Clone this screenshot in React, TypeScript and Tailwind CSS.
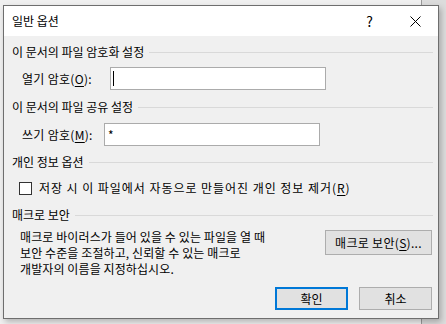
import React from "react";

const Mn = ({ k }: { k: string }) => <span className="underline underline-offset-2">{k}</span>;

const GroupHeader = ({ title }: { title: string }) => (
  <div className="flex h-[16px] items-center pl-[8px] pr-[5px]">
    <span className="leading-[16px] whitespace-nowrap">{title}</span>
    <div className="ml-[5px] h-px flex-1 bg-[#d9d9d9]" />
  </div>
);

const Btn = ({ children, primary }: { children: React.ReactNode; primary?: boolean }) => (
  <button
    className={
      primary
        ? "flex h-[23px] w-[73px] items-center justify-center border-2 border-[#0078d7] bg-[#e1e1e1] leading-[16px]"
        : "flex h-[23px] w-[73px] items-center justify-center border border-[#adadad] bg-[#e1e1e1] leading-[16px]"
    }
  >
    {children}
  </button>
);

export default function App() {
  return (
    <div className="relative h-[324px] w-[446px] overflow-hidden bg-[#f0f0f0] font-['Noto_Sans_CJK_KR','Noto_Sans',sans-serif] text-[12px] text-black">
      {/* window edge behind the dialog */}
      <div className="absolute left-[421px] top-0 h-full w-[25px] border-l border-[#9a9a9a] bg-[#dcdcdc]" />
      <div className="relative ml-[3px] mt-[5px] flex h-[314px] w-[436px] flex-col border border-[#6e6e6e] bg-[#f0f0f0] shadow-[2px_3px_6px_rgba(0,0,0,0.25)]">
        {/* title bar */}
        <div className="flex h-[30px] items-center bg-white pl-[8px]">
          <span className="leading-[16px]">일반 옵션</span>
          <span className="ml-auto mr-[37px] text-[14px] leading-[16px]">?</span>
          <svg width="11" height="11" viewBox="0 0 11 11" className="mr-[17px]">
            <path d="M0.5 0.5 L10.5 10.5 M10.5 0.5 L0.5 10.5" stroke="#000" strokeWidth="1" />
          </svg>
        </div>

        <div className="mt-[8px]">
          <GroupHeader title="이 문서의 파일 암호화 설정" />
        </div>
        <div className="mt-[7px] flex h-[23px] items-center">
          <span className="w-[106px] pl-[18px] leading-[16px] tracking-[0.3px]">
            열기 암호(<Mn k="O" />):
          </span>
          <div className="flex h-[23px] w-[216px] items-center border border-[#ababab] bg-white pl-[2px]">
            <div className="h-[15px] w-px bg-black" />
          </div>
        </div>

        <div className="mt-[9px]">
          <GroupHeader title="이 문서의 파일 공유 설정" />
        </div>
        <div className="mt-[8px] flex h-[23px] items-center">
          <span className="w-[100px] pl-[18px] leading-[16px] tracking-[0.3px]">
            쓰기 암호(<Mn k="M" />):
          </span>
          <div className="flex h-[23px] w-[216px] items-start border border-[#ababab] bg-white pl-[3px] pt-[3px] leading-[16px]">
            *
          </div>
        </div>

        <div className="mt-[8px]">
          <GroupHeader title="개인 정보 옵션" />
        </div>
        <div className="mt-[10px] flex h-[16px] items-center pl-[15px]">
          <div className="h-[13px] w-[13px] border border-[#333] bg-white" />
          <span className="ml-[7px] leading-[16px] tracking-[0.95px] whitespace-nowrap">
            저장 시 이 파일에서 자동으로 만들어진 개인 정보 제거(<Mn k="R" />)
          </span>
        </div>

        <div className="mt-[11px]">
          <GroupHeader title="매크로 보안" />
        </div>
        <div className="mt-[6px] flex pl-[16px] pr-[6px]">
          <p className="leading-[16px] tracking-[0.1px]">
            매크로 바이러스가 들어 있을 수 있는 파일을 열 때
            <br />
            보안 수준을 조절하고, 신뢰할 수 있는 매크로
            <br />
            개발자의 이름을 지정하십시오.
          </p>
          <button className="ml-auto mt-px flex h-[25px] w-[107px] items-center justify-center border border-[#adadad] bg-[#e1e1e1] leading-[16px] tracking-[0.3px]">
            매크로 보안(<Mn k="S" />)...
          </button>
        </div>

        <div className="mt-[10px] flex justify-end gap-[11px] pr-[6px]">
          <Btn primary>확인</Btn>
          <Btn>취소</Btn>
        </div>
      </div>
    </div>
  );
}
